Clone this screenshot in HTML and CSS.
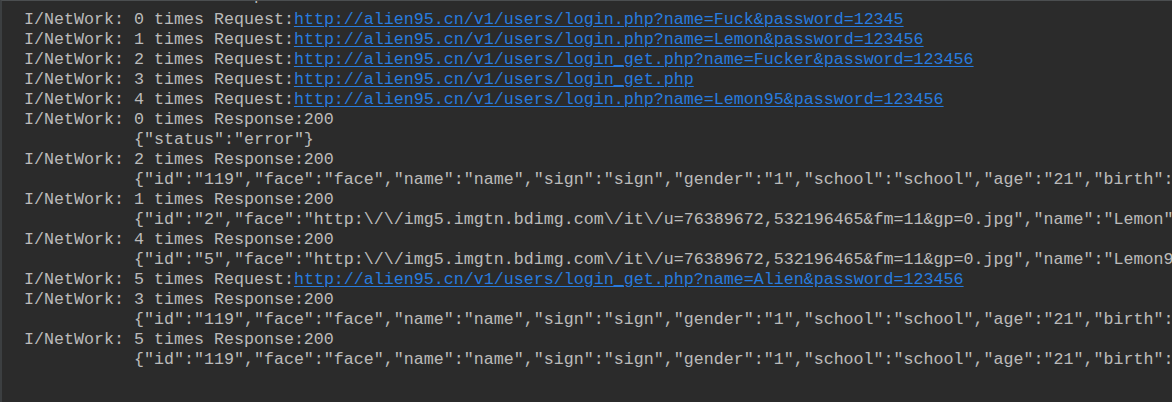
FILE: index.html
```html
<!DOCTYPE html>
<html>
<head>
<meta charset="utf-8">
<link rel="stylesheet" href="styles.css">
</head>
<body>
<div class="console">
<div class="log">
<div class="line partial">I/NetWork: 10 times Response:200</div>
<div class="line">I/NetWork: 0 times Request:<a class="link" href="#">http://alien95.cn/v1/users/login.php?name=Fuck&amp;password=12345</a></div>
<div class="line">I/NetWork: 1 times Request:<a class="link" href="#">http://alien95.cn/v1/users/login.php?name=Lemon&amp;password=123456</a></div>
<div class="line">I/NetWork: 2 times Request:<a class="link" href="#">http://alien95.cn/v1/users/login_get.php?name=Fucker&amp;password=123456</a></div>
<div class="line">I/NetWork: 3 times Request:<a class="link" href="#">http://alien95.cn/v1/users/login_get.php</a></div>
<div class="line">I/NetWork: 4 times Request:<a class="link" href="#">http://alien95.cn/v1/users/login.php?name=Lemon95&amp;password=123456</a></div>
<div class="line">I/NetWork: 0 times Response:200</div>
<div class="line">           {"status":"error"}</div>
<div class="line">I/NetWork: 2 times Response:200</div>
<div class="line">           {"id":"119","face":"face","name":"name","sign":"sign","gender":"1","school":"school","age":"21","birth":"1995-01-01"}</div>
<div class="line">I/NetWork: 1 times Response:200</div>
<div class="line">           {"id":"2","face":"http:\/\/img5.imgtn.bdimg.com\/it\/u=76389672,532196465&amp;fm=11&amp;gp=0.jpg","name":"Lemon","sign":"sign"}</div>
<div class="line">I/NetWork: 4 times Response:200</div>
<div class="line">           {"id":"5","face":"http:\/\/img5.imgtn.bdimg.com\/it\/u=76389672,532196465&amp;fm=11&amp;gp=0.jpg","name":"Lemon95","sign":"sign"}</div>
<div class="line">I/NetWork: 5 times Request:<a class="link" href="#">http://alien95.cn/v1/users/login_get.php?name=Alien&amp;password=123456</a></div>
<div class="line">I/NetWork: 3 times Response:200</div>
<div class="line">           {"id":"119","face":"face","name":"name","sign":"sign","gender":"1","school":"school","age":"21","birth":"1995-01-01"}</div>
<div class="line">I/NetWork: 5 times Response:200</div>
<div class="line">           {"id":"119","face":"face","name":"name","sign":"sign","gender":"1","school":"school","age":"21","birth":"1995-01-01"}</div>
</div>
</div>
</body>
</html>
```
FILE: styles.css
```css
html, body {
  margin: 0;
  padding: 0;
  background: #2b2b2b;
  overflow: hidden;
}

.console {
  width: 1172px;
  height: 402px;
  box-sizing: border-box;
  overflow: hidden;
  background: #2b2b2b;
  border-top: 1px solid #4b4e50;
  border-left: 2px solid #3c3f41;
  display: flex;
  flex-direction: column;
}

.log {
  margin-top: -15px;
  padding-left: 22px;
  display: flex;
  flex-direction: column;
}

.line {
  font-family: "Liberation Mono", "DejaVu Sans Mono", monospace;
  font-size: 16.67px;
  line-height: 20px;
  height: 20px;
  flex: none;
  white-space: pre;
  color: #bbbbbb;
}

.partial {
  margin-bottom: 4px;
}

.link {
  color: #287bde;
  text-decoration: underline;
  text-underline-offset: 2px;
}
```
